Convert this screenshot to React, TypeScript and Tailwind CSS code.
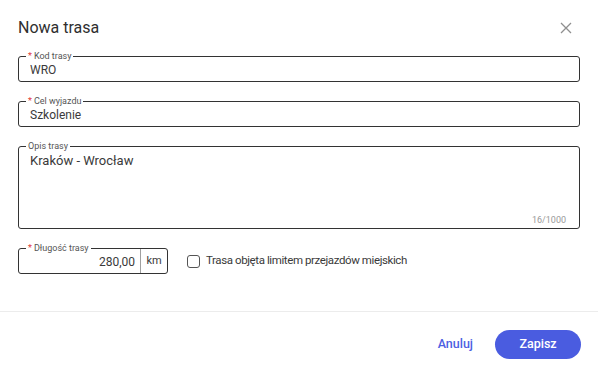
import { useState } from "react";

type FieldProps = {
    label: string;
    required?: boolean;
    children: React.ReactNode;
    className?: string;
};

function Field({ label, required, children, className = "" }: FieldProps) {
    return (
        <div className={`relative rounded-[3px] border border-[#333] ${className}`}>
            {/* floating label over the top border */}
            <span className="absolute left-[7px] top-[-7px] bg-white px-[2px] text-[9px] leading-[12px] text-[#555]">
                {required && <span className="mr-[2px] text-[#e0373a]">*</span>}
                {label}
            </span>
            {children}
        </div>
    );
}

export default function App() {
    const [code, setCode] = useState("WRO");
    const [goal, setGoal] = useState("Szkolenie");
    const [desc, setDesc] = useState("Kraków - Wrocław");
    const [length, setLength] = useState("280,00");
    const [limited, setLimited] = useState(false);

    return (
        <div className="flex h-[376px] w-[598px] flex-col bg-white font-['Roboto',sans-serif] text-[#3a3a3a]">
            {/* Header */}
            <div className="flex h-[55px] items-center justify-between pl-[18px] pr-[20px]">
                <h2 className="text-[16px] font-normal text-[#2f2f2f]">Nowa trasa</h2>
                <button className="flex h-[24px] w-[24px] items-center justify-center text-[#8f8f8f]">
                    <svg width="12" height="12" viewBox="0 0 12 12" fill="none" stroke="currentColor" strokeWidth="1.3">
                        <path d="M1 1L11 11M11 1L1 11" />
                    </svg>
                </button>
            </div>

            {/* Form */}
            <div className="flex flex-col gap-[19px] px-[18px] pb-[37px] pt-[1px]">
                <Field label="Kod trasy" required className="h-[26px]">
                    <input
                        value={code}
                        onChange={(e) => setCode(e.target.value)}
                        className="h-full w-full bg-transparent px-[11px] pt-[2px] text-[12px] text-[#3a3a3a] outline-none"
                    />
                </Field>
                <Field label="Cel wyjazdu" required className="h-[26px]">
                    <input
                        value={goal}
                        onChange={(e) => setGoal(e.target.value)}
                        className="h-full w-full bg-transparent px-[11px] pt-[2px] text-[12px] text-[#3a3a3a] outline-none"
                    />
                </Field>
                <Field label="Opis trasy" className="flex h-[83px] flex-col">
                    <textarea
                        value={desc}
                        onChange={(e) => setDesc(e.target.value)}
                        className="flex-1 resize-none bg-transparent px-[11px] pt-[5px] text-[13px] leading-[18px] text-[#3a3a3a] outline-none"
                    />
                    <div className="pb-[2px] pr-[13px] text-right text-[9px] leading-[12px] text-[#9a9a9a]">
                        {desc.length}/1000
                    </div>
                </Field>
                <div className="flex items-center">
                    <Field label="Długość trasy" required className="flex h-[26px] w-[150px]">
                        <input
                            value={length}
                            onChange={(e) => setLength(e.target.value)}
                            className="h-full min-w-0 flex-1 bg-transparent pr-[5px] pt-[2px] text-right text-[12px] text-[#3a3a3a] outline-none"
                        />
                        <span className="flex w-[27px] items-center justify-center border-l border-[#a0a0a0] pt-[1px] text-[11px] text-[#3a3a3a]">
                            km
                        </span>
                    </Field>
                    <label className="ml-[19px] flex items-center gap-[6px] text-[11.5px] tracking-[-0.4px] text-[#3a3a3a]">
                        <input
                            type="checkbox"
                            checked={limited}
                            onChange={(e) => setLimited(e.target.checked)}
                            className="h-[13px] w-[13px] appearance-none rounded-[3px] border border-[#555] bg-white"
                        />
                        Trasa objęta limitem przejazdów miejskich
                    </label>
                </div>
            </div>

            {/* Footer */}
            <div className="flex flex-1 items-center justify-end border-t border-[#ececec] pr-[17px]">
                <button className="mr-[22px] text-[12.5px] font-medium text-[#4d5fe2]">Anuluj</button>
                <button className="h-[29px] w-[86px] rounded-full bg-[#4a5ce0] text-[12.5px] font-medium text-white">
                    Zapisz
                </button>
            </div>
        </div>
    );
}
